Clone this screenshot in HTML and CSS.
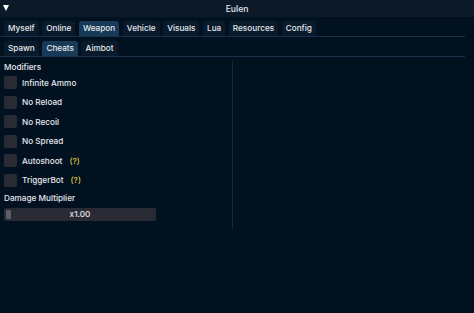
FILE: index.html
```html
<!DOCTYPE html>
<html lang="en">

<head>
    <meta charset="UTF-8">
    <meta name="viewport" content="width=device-width, initial-scale=1.0">
    <title>Eulen</title>
    <link rel="stylesheet" href="styles.css">
</head>

<body>
    <div class="window">
        <div class="titlebar">
            <span class="collapse"></span>
            <span class="title">Eulen</span>
        </div>

        <div class="tabs">
            <span class="tab">Myself</span>
            <span class="tab">Online</span>
            <span class="tab active">Weapon</span>
            <span class="tab">Vehicle</span>
            <span class="tab">Visuals</span>
            <span class="tab">Lua</span>
            <span class="tab">Resources</span>
            <span class="tab">Config</span>
        </div>

        <div class="tabs sub">
            <span class="tab">Spawn</span>
            <span class="tab active">Cheats</span>
            <span class="tab">Aimbot</span>
        </div>

        <div class="columns">
            <div class="column">
                <div class="heading">Modifiers</div>
                <div class="check"><span class="box"></span>Infinite Ammo</div>
                <div class="check"><span class="box"></span>No Reload</div>
                <div class="check"><span class="box"></span>No Recoil</div>
                <div class="check"><span class="box"></span>No Spread</div>
                <div class="check"><span class="box"></span>Autoshoot <span class="help">(?)</span></div>
                <div class="check"><span class="box"></span>TriggerBot <span class="help">(?)</span></div>
                <div class="heading">Damage Multiplier</div>
                <div class="slider">
                    <span class="grab"></span>
                    <span class="value">x1.00</span>
                </div>
            </div>
            <div class="column"></div>
        </div>
    </div>
</body>

</html>
```

FILE: styles.css
```css
body {
    margin: 0;
    padding: 0;
    background-color: #011120;
    font-family: Inter, "Noto Sans", sans-serif;
    font-size: 8.2px;
    font-weight: 500;
    color: #e6e8ec;
}

.window {
    width: 474px;
    height: 313px;
    background-color: #011120;
    overflow: hidden;
}

.titlebar {
    height: 17px;
    background-color: #0b1929;
    display: flex;
    align-items: center;
    justify-content: center;
    position: relative;
}

.collapse {
    position: absolute;
    left: 3px;
    top: 5px;
    width: 0;
    height: 0;
    border-left: 3px solid transparent;
    border-right: 3px solid transparent;
    border-top: 6px solid #ffffff;
}

.title {
    font-size: 8.6px;
}

.tabs {
    display: flex;
    gap: 3.6px;
    padding: 4px 4px 0 4px;
    margin-right: 9px;
    border-bottom: 1px solid #17324a;
}

.tab {
    height: 15px;
    line-height: 15px;
    padding: 0 4px;
    border-radius: 3px 3px 0 0;
    background-color: #081a2b;
}

.tab.active {
    background-color: #173a58;
}

.columns {
    display: flex;
    padding-top: 4px;
}

.column {
    width: 228px;
    height: 168px;
    padding-left: 4px;
    border-right: 1px solid #1a2838;
}

.column + .column {
    border-right: none;
}

.heading {
    height: 12px;
    line-height: 12px;
}

.check {
    display: flex;
    align-items: center;
    height: 19.5px;
}

.box {
    width: 13px;
    height: 13px;
    background-color: #2a2a35;
    border-radius: 2px;
    margin-right: 5px;
}

.help {
    color: #d8c243;
    margin-left: 7px;
}

.check + .heading {
    height: 18px;
    line-height: 17px;
}

.slider {
    position: relative;
    width: 152px;
    height: 13px;
    line-height: 13px;
    background-color: #2a2a35;
    border-radius: 2px;
    text-align: center;
}

.grab {
    position: absolute;
    left: 2px;
    top: 2px;
    width: 5px;
    height: 9px;
    background-color: #5d5d68;
    border-radius: 1px;
}
```
